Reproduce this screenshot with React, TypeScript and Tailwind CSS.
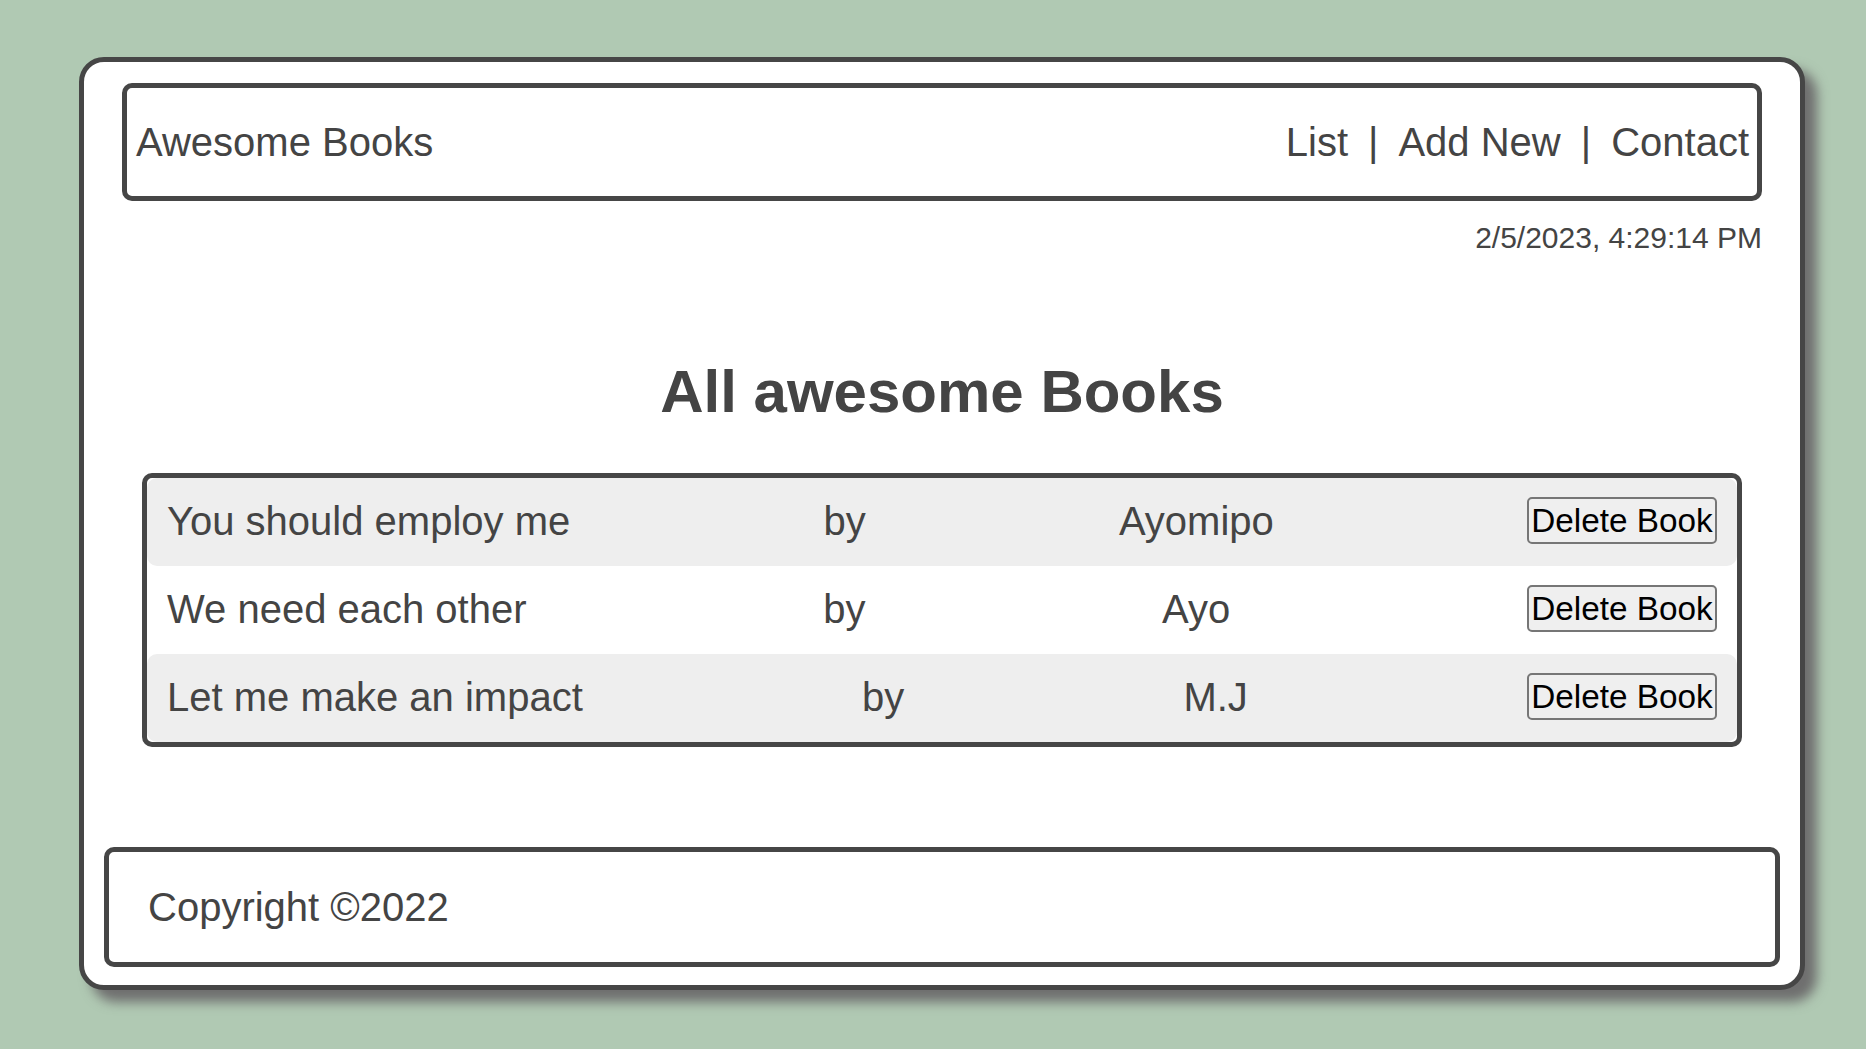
import React from 'react';

interface Book {
  title: string;
  author: string;
}

const books: Book[] = [
  { title: 'You should employ me', author: 'Ayomipo' },
  { title: 'We need each other', author: 'Ayo' },
  { title: 'Let me make an impact', author: 'M.J' },
];

const BookRow: React.FC<{ book: Book; index: number }> = ({ book, index }) => (
  <li
    className={
      'flex h-[88px] items-center justify-between rounded-[10px] px-[20px] pb-[2px] text-[40px] leading-[46px] ' +
      (index % 2 === 0 ? 'bg-[#eeeeee]' : 'bg-white')
    }
  >
    <span>{book.title}</span>
    <span>by</span>
    <span>{book.author}</span>
    <button className="h-[47px] w-[190px] rounded-[5px] border-2 border-[#767676] bg-[#efefef] text-center text-[33.33px] leading-[38px] text-black">
      Delete Book
    </button>
  </li>
);

export default function App() {
  return (
    <div className="min-h-screen bg-[#b0c9b3] pt-[57px] font-['Liberation_Sans',Arial,sans-serif] text-[#444444]">
      <div className="ml-[79px] w-[1726px] rounded-[25px] border-[5px] border-[#464646] bg-white px-[20px] pt-[21px] pb-[18px] shadow-[12px_12px_12px_#6f6f6f]">
        <header className="mx-[18px] flex h-[118px] items-center justify-between rounded-[10px] border-[5px] border-[#464646] pr-[8px] pl-[9px] text-[40px] leading-[46px]">
          <span>Awesome Books</span>
          <nav className="flex items-center gap-[20px]">
            <a>List</a>
            <span>|</span>
            <a>Add New</a>
            <span>|</span>
            <a>Contact</a>
          </nav>
        </header>

        <p className="mx-[18px] mt-[20px] text-right text-[30px] leading-[34.5px]">2/5/2023, 4:29:14 PM</p>

        <h2 className="mt-[101px] text-center text-[60px] leading-[69px] font-bold">All awesome Books</h2>

        <ul className="mx-[38px] mt-[47px] rounded-[10px] border-[5px] border-[#464646]">
          {books.map((book, i) => (
            <BookRow key={book.title} book={book} index={i} />
          ))}
        </ul>

        <footer className="mt-[100px] flex h-[120px] items-center rounded-[10px] border-[5px] border-[#464646] px-[39px] text-[40px] leading-[46px]">
          Copyright ©2022
        </footer>
      </div>
    </div>
  );
}
